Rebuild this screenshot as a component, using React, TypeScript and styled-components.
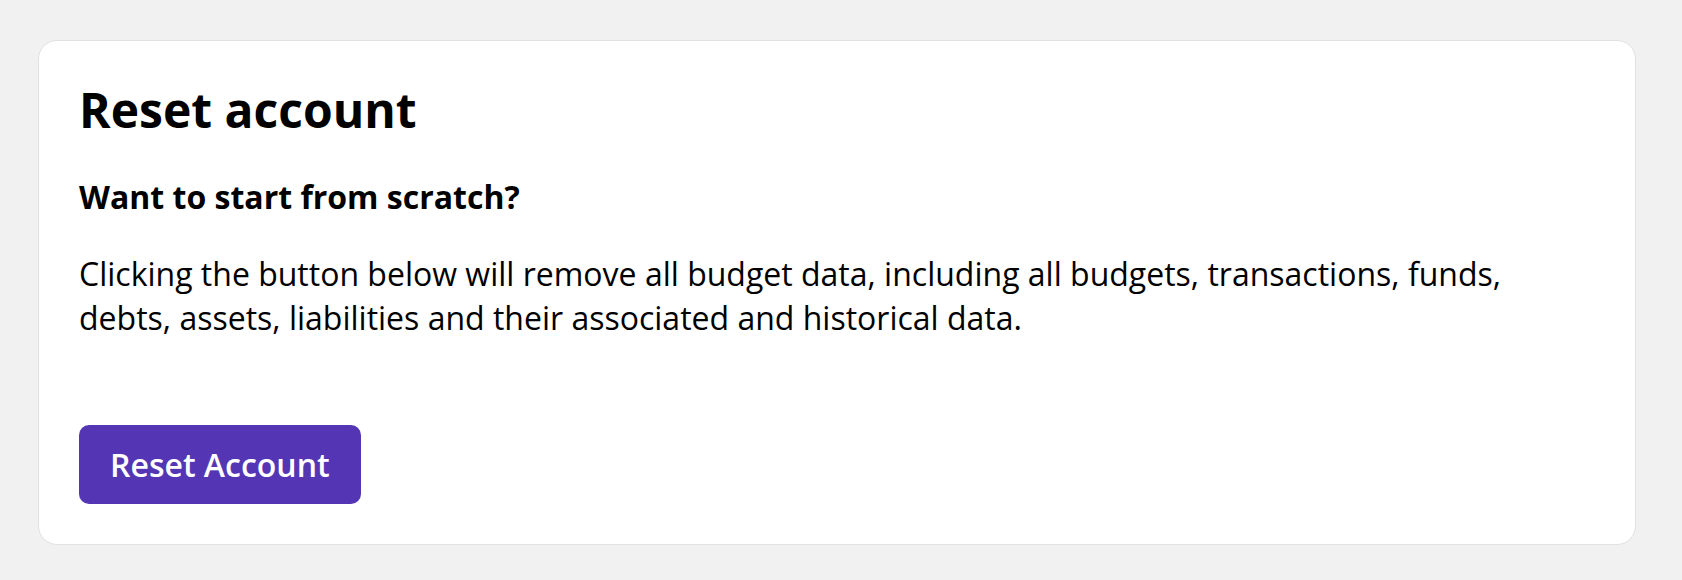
import styled, { createGlobalStyle } from 'styled-components';

const GlobalStyle = createGlobalStyle`
  html, body {
    margin: 0;
    padding: 0;
    background: #f1f1f1;
  }

  body {
    font-family: 'Open Sans', 'Noto Sans', sans-serif;
    color: #000;
  }
`;

const Page = styled.main`
  box-sizing: border-box;
  min-height: 580px;
  padding: 40px 46px 35px 38px;
`;

const Card = styled.section`
  box-sizing: border-box;
  background: #fff;
  border: 1px solid #e1e1e1;
  border-radius: 19px;
  padding: 40px;
  display: flex;
  flex-direction: column;
  align-items: flex-start;
`;

const Title = styled.h1`
  margin: 0;
  font-size: 48px;
  font-weight: 700;
  line-height: 1.2;
`;

const Subtitle = styled.h2`
  margin: 36px 0 0;
  font-size: 32px;
  font-weight: 700;
  line-height: 44px;
`;

const Body = styled.p`
  margin: 33px 0 0;
  max-width: 1460px;
  font-size: 32px;
  font-weight: 400;
  line-height: 44px;
`;

const ResetButton = styled.button`
  margin-top: 85px;
  height: 79px;
  padding: 0 31px;
  border: none;
  border-radius: 10px;
  background: #5436b5;
  color: #fff;
  font-family: inherit;
  font-size: 32px;
  font-weight: 600;
  cursor: pointer;
`;

export default function App() {
  return (
    <>
      <GlobalStyle />
      <Page>
        <Card>
          <Title>Reset account</Title>
          <Subtitle>Want to start from scratch?</Subtitle>
          <Body>
            Clicking the button below will remove all budget data, including all budgets,
            transactions, funds, debts, assets, liabilities and their associated and historical
            data.
          </Body>
          <ResetButton type="button">Reset Account</ResetButton>
        </Card>
      </Page>
    </>
  );
}
